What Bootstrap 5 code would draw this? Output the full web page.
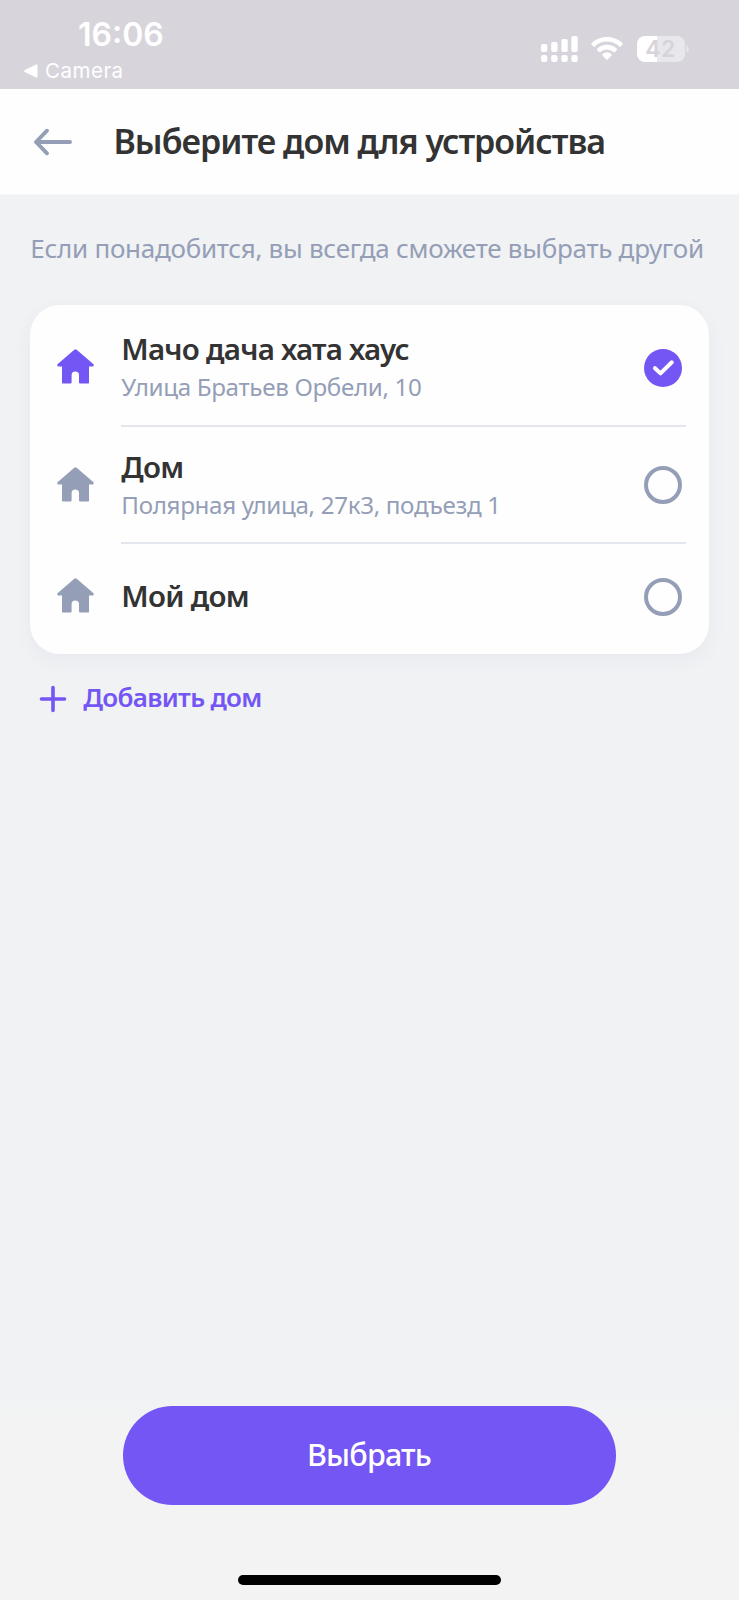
<!DOCTYPE html>
<html lang="ru">
<head>
<meta charset="utf-8">
<meta name="viewport" content="width=device-width, initial-scale=1">
<title>Выбор дома</title>
<link href="https://cdn.jsdelivr.net/npm/bootstrap@5.3.0/dist/css/bootstrap.min.css" rel="stylesheet">
<style>
  :root { --violet: #7456f5; --muted: #959eb7; --ink: #333; }
  body { font-family: "Noto Sans", "Open Sans", sans-serif; background: #f0f1f4; color: var(--ink); }
  .screen { height: 1600px; overflow: hidden; background: #f0f2f4; }
  .txt { white-space: nowrap; }
  .status { height: 89px; background: #d7d4dc; color: #fff; font-family: Inter, sans-serif; padding-left: 24px; padding-right: 49px; }
  .clock { font-size: 32px; font-weight: 600; line-height: 38px; letter-spacing: 0; margin: 16px 0 0 54px; }
  .back-app { font-size: 20.5px; line-height: 26px; letter-spacing: .5px; margin-top: 4px; gap: 7px; }
  .indicators { padding-top: 36px; }
  .wifi { margin: 0 14px 0 13px; }
  .topbar { height: 106px; background: #fefefe; border-bottom: 1px solid #f7f7f8; padding: 0 33px; }
  .topbar h1 { font-size: 34px; font-weight: 600; letter-spacing: -1px; line-height: 44px; margin: 0 0 1px 40.5px; }
  .hint { font-size: 26px; line-height: 36px; letter-spacing: -.265px; color: var(--muted); padding: 34.5px 0 39.5px; margin: 0; }
  .content-col { padding: 0 30.3px; }
  .homes { background: #fefefe; border: 0; border-radius: 30px; padding: 4.2px 0 5.3px; box-shadow: 0 6px 20px rgba(70, 80, 130, .05); }
  .home-row { height: 117.4px; padding-left: 27px; padding-right: 22.5px; }
  .home-row.final { height: 104.6px; }
  .home-row .house { margin-bottom: 2.5px; margin-right: 27px; }
  .home-body { border-bottom: 2px solid #e4e6ed; padding-right: 4px; }
  .final .home-body { border: 0; }
  .home-title { font-size: 29.5px; font-weight: 600; line-height: 38px; letter-spacing: -.75px; }
  .home-addr { font-size: 24.2px; line-height: 38px; letter-spacing: -.34px; color: var(--muted); }
  .home-labels { padding-top: 3px; }
  .final .home-labels { padding: 0 0 1px; }
  .pick { margin-top: 2px; }
  .violet { color: var(--violet); }
  .grey { color: var(--muted); }
  .add-home { font-size: 26px; font-weight: 600; line-height: 38px; letter-spacing: -.68px; margin-top: 24px; padding-left: 9px; gap: 16px; color: var(--violet); }
  .add-home svg { margin-top: 4px; }
  .bottom { height: 220px; background: linear-gradient(#f0f2f4, #f3f3f3 50px); padding-top: 26.3px; }
  .btn-pick { width: 493px; height: 99px; font-size: 30.5px; font-weight: 500; letter-spacing: -.8px; line-height: 40px; color: #fff; background: var(--violet); border: 0; padding: 0 1px 3px 0; }
  .btn-pick:hover { background: #6648e8; color: #fff; }
  .home-bar { width: 263.5px; height: 9.7px; background: #000; margin-bottom: 15.3px; }
</style>
</head>
<body>
<svg class="d-none">
  <symbol id="house" viewBox="0 0 37 35">
    <path fill="currentColor" d="M17.300.7a1.900 1.900 0 0 1 2.400 0L36.200 15c1 .9.600 2.400-.8 2.400H32v16c0 .6-.4 1-1 1h-8.200c-.5 0-.8-.3-.8-.8v-7.300a3.700 3.700 0 0 0-7.400 0v7.300c0 .5-.3.8-.8.8H6c-.6 0-1-.4-1-1v-16H1.600C.200 17.400-.2 15.900.8 15z"/>
  </symbol>
</svg>
<div class="screen d-flex flex-column">
  <div class="status d-flex justify-content-between align-items-start">
    <div>
      <div class="clock txt">16:06</div>
      <div class="back-app txt d-flex align-items-center">
        <svg width="14" height="14" viewBox="0 0 14 14"><path d="M1.200 7 12.500 1.400v11.200z" fill="#fff" stroke="#fff" stroke-width="2" stroke-linejoin="round"/></svg>
        <span>Camera</span>
      </div>
    </div>
    <div class="indicators d-flex align-items-start">
      <svg width="37" height="27" viewBox="0 0 37 27" fill="#fff">
        <rect x="0" y="8" width="6.300" height="8" rx="1.800"/><rect x="10.200" y="6" width="6.300" height="10" rx="1.800"/><rect x="20.400" y="3" width="6.300" height="13" rx="1.800"/><rect x="30.400" y="0" width="6.300" height="16" rx="1.800"/>
        <rect x="0" y="19" width="6.300" height="7" rx="2"/><rect x="10.200" y="19" width="6.300" height="7" rx="2"/><rect x="20.400" y="19" width="6.300" height="7" rx="2"/><rect x="30.400" y="19" width="6.300" height="7" rx="2"/>
      </svg>
      <svg class="wifi" width="32" height="27" viewBox="-16 -24.500 32 27" fill="#fff">
        <path d="M0-23.500c6 0 11.500 2.300 15.500 6.200.4.400.4 1 0 1.400l-1.900 1.900c-.4.400-1 .4-1.400 0A17.500 17.500 0 0 0 0-18.900c-4.700 0-9 1.800-12.200 4.900-.4.400-1 .4-1.400 0l-1.900-1.900c-.4-.4-.4-1 0-1.400C-11.500-21.200-6-23.500 0-23.500z"/>
        <path d="M0-15.700c3.800 0 7.300 1.500 9.900 3.900.4.400.4 1 0 1.400L8-8.500c-.4.400-1 .4-1.400 0A9.700 9.700 0 0 0 0-11.100c-2.500 0-4.800 1-6.600 2.600-.4.400-1 .4-1.400 0l-1.900-1.900c-.4-.4-.4-1 0-1.400A14.500 14.500 0 0 1 0-15.700z"/>
        <path d="M0-8c1.700 0 3.300.6 4.500 1.700.4.300.4.900 0 1.300L.7-1c-.4.400-1 .4-1.400 0L-4.500-5c-.4-.4-.4-1 0-1.300C-3.300-7.400-1.700-8 0-8z"/>
      </svg>
      <svg width="53" height="27" viewBox="0 0 53 27">
        <path d="M20.500 0H8a8 8 0 0 0-8 8v10a8 8 0 0 0 8 8h12.500z" fill="#fff"/>
        <path d="M20.500 0H40a8 8 0 0 1 8 8v10a8 8 0 0 1-8 8H20.500z" fill="#e8e7eb"/>
        <path d="M49.500 9.500c3.300 1 3.300 6 0 7z" fill="#e8e7eb"/>
        <text x="23.600" y="21.300" text-anchor="middle" font-family="Inter, sans-serif" font-size="23" font-weight="600" letter-spacing=".4" fill="#d7d4dc">42</text>
      </svg>
    </div>
  </div>

  <header class="topbar d-flex align-items-center">
    <svg width="40" height="30" viewBox="0 0 40 30" fill="none" stroke="#959eb7" stroke-width="3.900" stroke-linecap="round" stroke-linejoin="round"><path d="M37 15H3M14 3.700 3 15l11 11.300"/></svg>
    <h1 class="txt">Выберите дом для устройства</h1>
  </header>

  <main class="content-col">
    <p class="hint txt">Если понадобится, вы всегда сможете выбрать другой</p>

    <div class="card homes">
      <div class="home-row d-flex align-items-center">
        <svg class="house violet flex-shrink-0" width="37" height="35"><use href="#house"/></svg>
        <div class="home-body d-flex align-items-center justify-content-between flex-grow-1 h-100">
          <div class="home-labels">
            <div class="home-title txt">Мачо дача хата хаус</div>
            <div class="home-addr txt">Улица Братьев Орбели, 10</div>
          </div>
          <svg class="pick" width="38" height="38" viewBox="0 0 38 38"><circle cx="19" cy="19" r="19" fill="#7456f5"/><path d="m11 19.200 5.500 5.200L27.800 13.300" fill="none" stroke="#fefefe" stroke-width="4" stroke-linecap="round" stroke-linejoin="round"/></svg>
        </div>
      </div>
      <div class="home-row d-flex align-items-center">
        <svg class="house grey flex-shrink-0" width="37" height="35"><use href="#house"/></svg>
        <div class="home-body d-flex align-items-center justify-content-between flex-grow-1 h-100">
          <div class="home-labels">
            <div class="home-title txt">Дом</div>
            <div class="home-addr txt">Полярная улица, 27к3, подъезд 1</div>
          </div>
          <svg class="pick" width="38" height="38" viewBox="0 0 38 38"><circle cx="19" cy="19" r="17" fill="none" stroke="#959eb7" stroke-width="4"/></svg>
        </div>
      </div>
      <div class="home-row final d-flex align-items-center">
        <svg class="house grey flex-shrink-0" width="37" height="35"><use href="#house"/></svg>
        <div class="home-body d-flex align-items-center justify-content-between flex-grow-1 h-100">
          <div class="home-labels">
            <div class="home-title txt">Мой дом</div>
          </div>
          <svg class="pick" width="38" height="38" viewBox="0 0 38 38"><circle cx="19" cy="19" r="17" fill="none" stroke="#959eb7" stroke-width="4"/></svg>
        </div>
      </div>
    </div>

    <div class="add-home d-flex align-items-center">
      <svg width="28" height="28" viewBox="0 0 28 28" stroke="#7456f5" stroke-width="3.600" stroke-linecap="round"><path d="M14 2.500v23M2.500 14h23"/></svg>
      <span class="txt">Добавить дом</span>
    </div>
  </main>

  <footer class="bottom mt-auto d-flex flex-column align-items-center">
    <button type="button" class="btn btn-pick rounded-pill">Выбрать</button>
    <div class="home-bar rounded-pill mt-auto"></div>
  </footer>
</div>
<script src="https://cdn.jsdelivr.net/npm/bootstrap@5.3.0/dist/js/bootstrap.bundle.min.js"></script>
</body>
</html>
